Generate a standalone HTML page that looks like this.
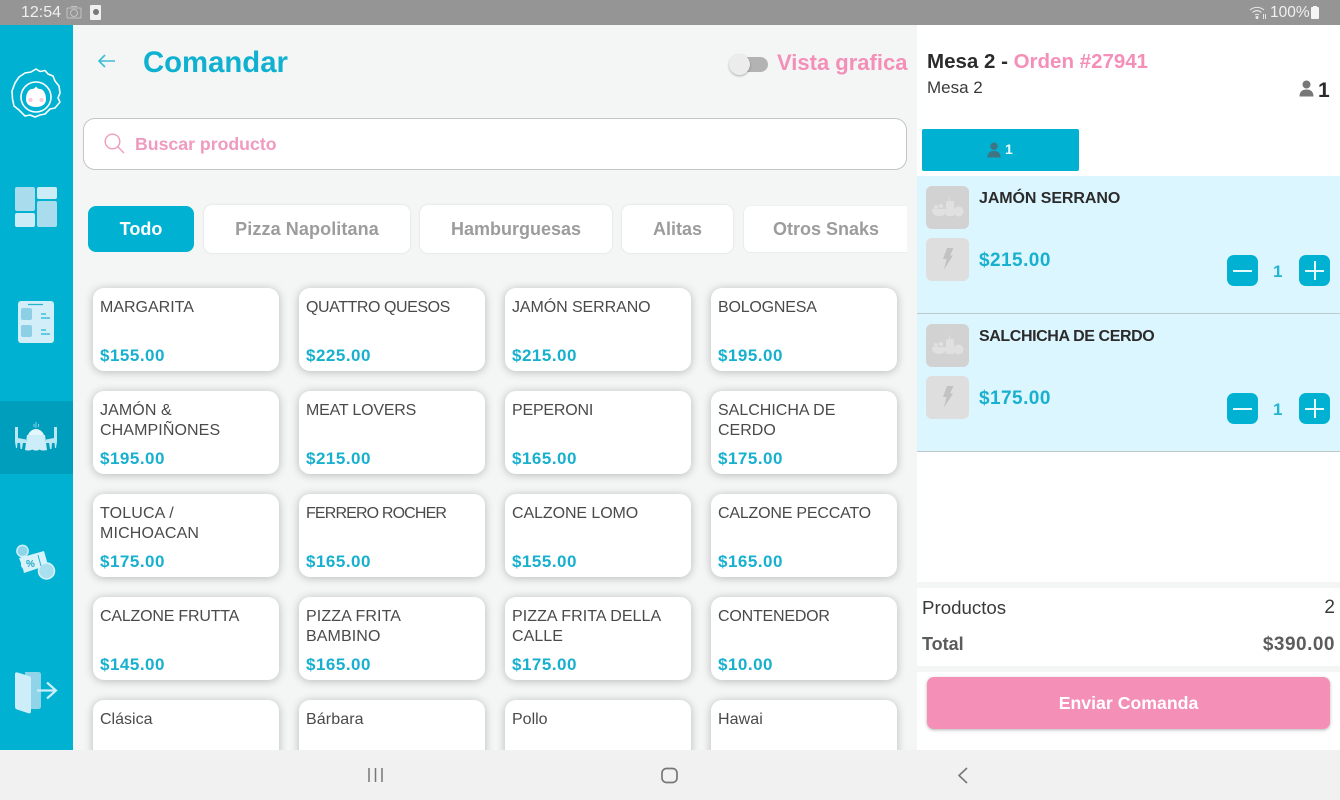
<!DOCTYPE html>
<html lang="es"><head><meta charset="utf-8"><title>Comandar</title>
<style>
*{box-sizing:border-box}
html,body{margin:0;padding:0;width:1340px;height:800px;overflow:hidden;background:#fff;font-family:"Liberation Sans",sans-serif}
.a{position:absolute}
.t{position:absolute;white-space:nowrap}
.card{position:absolute;width:186px;height:83px;background:#fff;border-radius:11px;box-shadow:0 1px 9px rgba(0,0,0,.25)}
.card .n{position:absolute;left:7px;top:10px;font-size:16px;line-height:20px;color:#4a4a4a;white-space:nowrap}
.card .p{position:absolute;left:7px;top:59px;font-size:17px;letter-spacing:.5px;line-height:18px;font-weight:bold;color:#18b0cf;white-space:nowrap}
.tab{position:absolute;top:205px;height:48px;background:#fff;border-radius:8px;box-shadow:0 0 2px rgba(0,0,0,.13);font-weight:bold;font-size:18px;line-height:48px;color:#9c9c9c;text-align:center;white-space:nowrap;overflow:hidden}
.thumb{position:absolute;left:926px;width:43px;height:43px;border-radius:6px}
.btn{position:absolute;width:31px;height:31px;background:#00b1d2;border-radius:7px}
.btn i{position:absolute;background:#e6fbff}
</style></head><body>

<div class="a" style="left:73px;top:25px;width:844px;height:725px;background:#f4f6f6"></div>

<!-- cards -->
<div id="cards" class="a" style="left:0;top:0;width:917px;height:750px;overflow:hidden">
<div class="card" style="left:93px;top:288px"><div class="n">MARGARITA</div><div class="p">$155.00</div></div>
<div class="card" style="left:299px;top:288px"><div class="n" style="letter-spacing:-.43px">QUATTRO QUESOS</div><div class="p">$225.00</div></div>
<div class="card" style="left:505px;top:288px"><div class="n" style="letter-spacing:-.08px">JAMÓN SERRANO</div><div class="p">$215.00</div></div>
<div class="card" style="left:711px;top:288px"><div class="n" style="letter-spacing:-.2px">BOLOGNESA</div><div class="p">$195.00</div></div>
<div class="card" style="left:93px;top:391px"><div class="n" style="letter-spacing:.1px">JAMÓN &amp;<br>CHAMPIÑONES</div><div class="p">$195.00</div></div>
<div class="card" style="left:299px;top:391px"><div class="n" style="letter-spacing:-.2px">MEAT LOVERS</div><div class="p">$215.00</div></div>
<div class="card" style="left:505px;top:391px"><div class="n" style="letter-spacing:-.2px">PEPERONI</div><div class="p">$165.00</div></div>
<div class="card" style="left:711px;top:391px"><div class="n">SALCHICHA DE<br>CERDO</div><div class="p">$175.00</div></div>
<div class="card" style="left:93px;top:494px"><div class="n" style="letter-spacing:.15px">TOLUCA /<br>MICHOACAN</div><div class="p">$175.00</div></div>
<div class="card" style="left:299px;top:494px"><div class="n" style="letter-spacing:-.85px">FERRERO ROCHER</div><div class="p">$165.00</div></div>
<div class="card" style="left:505px;top:494px"><div class="n" style="letter-spacing:-.08px">CALZONE LOMO</div><div class="p">$155.00</div></div>
<div class="card" style="left:711px;top:494px"><div class="n" style="letter-spacing:-.2px">CALZONE PECCATO</div><div class="p">$165.00</div></div>
<div class="card" style="left:93px;top:597px"><div class="n" style="letter-spacing:-.2px">CALZONE FRUTTA</div><div class="p">$145.00</div></div>
<div class="card" style="left:299px;top:597px"><div class="n" style="letter-spacing:.1px">PIZZA FRITA<br>BAMBINO</div><div class="p">$165.00</div></div>
<div class="card" style="left:505px;top:597px"><div class="n" style="letter-spacing:.06px">PIZZA FRITA DELLA<br>CALLE</div><div class="p">$175.00</div></div>
<div class="card" style="left:711px;top:597px"><div class="n" style="letter-spacing:-.2px">CONTENEDOR</div><div class="p">$10.00</div></div>
<div class="card" style="left:93px;top:700px"><div class="n">Clásica</div></div>
<div class="card" style="left:299px;top:700px"><div class="n" style="letter-spacing:.1px">Bárbara</div></div>
<div class="card" style="left:505px;top:700px"><div class="n">Pollo</div></div>
<div class="card" style="left:711px;top:700px"><div class="n" style="letter-spacing:.1px">Hawai</div></div>
</div>

<!-- header -->
<svg class="a" style="left:97px;top:52px" width="20" height="18" viewBox="0 0 20 18" fill="none" stroke="#3cbcd6" stroke-width="1.6"><path d="M2 9H18M8 3L2 9L8 15"/></svg>
<div class="t" style="left:143px;top:45px;font-size:29.300px;line-height:36px;font-weight:bold;color:#0fb0d0">Comandar</div>
<div class="a" style="left:732px;top:57px;width:36px;height:15px;border-radius:8px;background:#b3b3b3"></div>
<div class="a" style="left:729px;top:54px;width:21px;height:21px;border-radius:50%;background:#ececec;box-shadow:0 1px 2px rgba(0,0,0,.3)"></div>
<div class="t" style="left:777px;top:49px;font-size:22px;line-height:28px;font-weight:bold;color:#f48fb8">Vista grafica</div>

<!-- search -->
<div class="a" style="left:83px;top:118px;width:824px;height:52px;background:#fff;border:1px solid #c4c4c4;border-radius:12px"></div>
<svg class="a" style="left:104px;top:133px" width="21" height="21" viewBox="0 0 21 21" fill="none" stroke="#ef9dbf" stroke-width="1.400"><circle cx="8.500" cy="8.500" r="7.300"/><path d="M13.800 13.800L20 20"/></svg>
<div class="t" style="left:135px;top:134px;font-size:17.700px;line-height:21px;font-weight:bold;color:#f09ac0">Buscar producto</div>

<!-- tabs -->
<div class="tab" style="left:88px;top:206px;width:106px;height:46px;line-height:46px;background:#00b1d2;color:#fff;box-shadow:none">Todo</div>
<div class="tab" style="left:204px;width:206px;letter-spacing:.1px">Pizza Napolitana</div>
<div class="tab" style="left:420px;width:192px">Hamburguesas</div>
<div class="tab" style="left:622px;width:111px">Alitas</div>
<div class="tab" style="left:743px;width:164px;border-radius:8px 0 0 8px;box-shadow:none;border-left:1px solid #ececec;border-top:1px solid #f0f0f0;border-bottom:1px solid #ececec;line-height:46px;text-indent:1px">Otros Snaks</div>

<!-- sidebar -->
<div class="a" style="left:0;top:25px;width:73px;height:725px;background:#00b1d2"></div>
<div class="a" style="left:0;top:401px;width:73px;height:73px;background:#009ebd"></div>

<svg class="a" style="left:10px;top:67px" width="52" height="52" viewBox="0 0 52 52">
<path d="M26 2L30 4.500L35 3.500L38 7L43 9L45 14L49 19L50 26L48 31L50 35L45 41L40 42L35 47L30 48L25 50L20 48L15 49L9 43L4 39L2.500 32L2 24L5 16L9 10L15 6L21 5Z" fill="none" stroke="#fff" stroke-width="1.600" stroke-linejoin="round"/>
<circle cx="26" cy="30" r="15" fill="none" stroke="#fff" stroke-width="1.600"/>
<path d="M16 32C16 26 19 22 22 22C23.500 22 25 21 26 19.500C27 21 28.500 22 30 22C33 22 36 26 36 32C36 38 31 40 26 40C21 40 16 38 16 32Z" fill="#fff"/>
<circle cx="20.500" cy="33" r="2.200" fill="#f7cbdc"/><circle cx="31.500" cy="33" r="2.200" fill="#f7cbdc"/>
</svg>

<svg class="a" style="left:15px;top:187px" width="43" height="41" viewBox="0 0 43 41">
<rect x="0" y="0" width="20" height="24" rx="2" fill="#a9dcec"/><rect x="22" y="0" width="20" height="12" rx="2" fill="#ccedf7"/>
<rect x="22" y="14" width="20" height="26" rx="2" fill="#a9dcec"/><rect x="0" y="26" width="20" height="14" rx="2" fill="#ccedf7"/>
</svg>

<svg class="a" style="left:18px;top:301px" width="37" height="42" viewBox="0 0 37 42">
<rect x="0" y="0" width="36" height="42" rx="3" fill="#d2eef8"/>
<rect x="3" y="7" width="11" height="12" rx="2" fill="#8dd0e6"/><rect x="3" y="24" width="11" height="12" rx="2" fill="#8dd0e6"/>
<path d="M10 3.500H25M23 13H28M23 17H32M23 29H28M23 33H32" stroke="#22b5d2" stroke-width="1.300"/>
</svg>

<svg class="a" style="left:15px;top:422px" width="42" height="31" viewBox="0 0 42 31">
<path d="M0 5H3V16L11 17.500V21H8L7 27H5.500L5 21L2.500 21L2 26H1L0 20Z" fill="#b9e7f4"/>
<path d="M42 5H39V16L31 17.500V21H34L35 27H36.500L37 21L39.500 21L40 26H41L42 20Z" fill="#b9e7f4"/>
<path d="M12 13H30L32 28C29 29 26 28.500 24.500 27.500C22 29 19.500 29 17.500 27.500C15.500 28.500 12.500 29 10 28Z" fill="#cdeef8"/>
<path d="M13 13C14.500 9 18 7 21 7C24 7 27.500 9 29 13Z" fill="#e2f6fb"/>
<path d="M19 5V2M21 6V0M23.500 5V2" stroke="#8dd0e6" stroke-width="1"/>
</svg>

<svg class="a" style="left:15px;top:544px" width="42" height="38" viewBox="0 0 42 38">
<path d="M4 14L29 7L33 21L9 29L8 25L6 22L6 19Z" fill="#d8f2fa"/>
<circle cx="7.500" cy="7" r="5.700" fill="#8fd5e9" stroke="#d8f2fa" stroke-width="1.300"/>
<circle cx="31.500" cy="27" r="8" fill="#a9e0f0" stroke="#d8f2fa" stroke-width="1.500"/>
<text x="11" y="23" font-family="Liberation Sans,sans-serif" font-size="10" font-weight="bold" fill="#22a7c4">%</text>
<path d="M23 11L26 22" stroke="#22b5d2" stroke-width="1"/>
</svg>

<svg class="a" style="left:15px;top:671px" width="43" height="43" viewBox="0 0 43 43">
<path d="M10 1H23C25.500 1 26 2 26 4V35C26 37 25 38 23 38H12Z" fill="#8fd4e9"/>
<path d="M0 3C0 1.500 1 1 2.500 1.500L14 5C15.500 5.400 16 6 16 7.500V40C16 42 15 42.800 13.500 42.300L2 38.500C.5 38 0 37 0 35.500Z" fill="#cdeef8"/>
<path d="M22 19.500H41M32 11.500L41 19.500L32 27.500" fill="none" stroke="#cdeef8" stroke-width="2.200"/>
</svg>

<!-- right panel -->
<div class="a" style="left:917px;top:25px;width:423px;height:725px;background:#fff"></div>
<div class="t" style="left:927px;top:49px;font-size:20.500px;line-height:25px;font-weight:bold;color:#2b2b2b">Mesa 2 - <span style="color:#f48fb8">Orden #27941</span></div>
<div class="t" style="left:927px;top:78px;font-size:17px;line-height:19px;color:#3a3a3a">Mesa 2</div>
<svg class="a" style="left:1299px;top:80px" width="15" height="17" viewBox="0 0 15 17" fill="#777"><circle cx="7.500" cy="4.500" r="4"/><path d="M0.500 16.500C0.500 11.500 3.500 9.500 7.500 9.500C11.500 9.500 14.500 11.500 14.500 16.500Z"/></svg>
<div class="t" style="left:1318px;top:79px;font-size:21px;line-height:24px;font-weight:bold;color:#2b2b2b">1</div>

<div class="a" style="left:922px;top:129px;width:157px;height:42px;background:#00b1d2;border-radius:2px"></div>
<svg class="a" style="left:987px;top:142px" width="14" height="16" viewBox="0 0 15 17" fill="#3f7482"><circle cx="7.500" cy="4.500" r="4"/><path d="M0.500 16.500C0.500 11.500 3.500 9.500 7.500 9.500C11.500 9.500 14.500 11.500 14.500 16.500Z"/></svg>
<div class="t" style="left:1005px;top:141px;font-size:14px;line-height:17px;font-weight:bold;color:#e8fbff">1</div>

<div class="a" style="left:917px;top:176px;width:423px;height:138px;background:#dcf6ff;border-bottom:1px solid #bcc8cc"></div>
<div class="a" style="left:917px;top:314px;width:423px;height:138px;background:#dcf6ff;border-bottom:1px solid #bcc8cc"></div>

<!-- item 1 -->
<div class="thumb" style="top:186px;background:#d2d2d2"></div>
<svg class="a" style="left:931px;top:196px" width="34" height="22" viewBox="0 0 34 22" fill="#e0e0e0"><path d="M1 13H15.500C15.500 18 13 20 8 20C3.500 20 1 18 1 13Z"/><circle cx="5" cy="11" r="2"/><circle cx="10" cy="10" r="2.200"/><rect x="15" y="5" width="8" height="15" rx="1.500"/><path d="M19 5L18 1" stroke="#e0e0e0"/><circle cx="27.500" cy="15.500" r="5"/></svg>
<div class="thumb" style="top:238px;background:#dedede"></div>
<svg class="a" style="left:942px;top:248px" width="13" height="22" viewBox="0 0 13 22" fill="#c2c2c2"><path d="M5 0H11.500L8 7.500H11L2 21.500L4.500 11H1Z"/></svg>
<div class="t" style="left:979px;top:189px;font-size:16px;letter-spacing:-.08px;line-height:19px;font-weight:bold;color:#2b2b2b">JAMÓN SERRANO</div>
<div class="t" style="left:979px;top:250px;font-size:19px;letter-spacing:.45px;line-height:22px;font-weight:bold;color:#18b0cf">$215.00</div>
<div class="btn" style="left:1227px;top:255px"><i style="left:6px;top:14.500px;width:19px;height:2px"></i></div>
<div class="t" style="left:1273px;top:262px;font-size:17px;line-height:19px;font-weight:bold;color:#22b5d2">1</div>
<div class="btn" style="left:1299px;top:255px"><i style="left:6px;top:15px;width:19px;height:1.500px"></i><i style="left:15px;top:6px;width:1.500px;height:19px"></i></div>

<!-- item 2 -->
<div class="thumb" style="top:324px;background:#d2d2d2"></div>
<svg class="a" style="left:931px;top:334px" width="34" height="22" viewBox="0 0 34 22" fill="#e0e0e0"><path d="M1 13H15.500C15.500 18 13 20 8 20C3.500 20 1 18 1 13Z"/><circle cx="5" cy="11" r="2"/><circle cx="10" cy="10" r="2.200"/><rect x="15" y="5" width="8" height="15" rx="1.500"/><path d="M19 5L18 1" stroke="#e0e0e0"/><circle cx="27.500" cy="15.500" r="5"/></svg>
<div class="thumb" style="top:376px;background:#dedede"></div>
<svg class="a" style="left:942px;top:386px" width="13" height="22" viewBox="0 0 13 22" fill="#c2c2c2"><path d="M5 0H11.500L8 7.500H11L2 21.500L4.500 11H1Z"/></svg>
<div class="t" style="left:979px;top:327px;font-size:16px;letter-spacing:-.4px;line-height:19px;font-weight:bold;color:#2b2b2b">SALCHICHA DE CERDO</div>
<div class="t" style="left:979px;top:388px;font-size:19px;letter-spacing:.45px;line-height:22px;font-weight:bold;color:#18b0cf">$175.00</div>
<div class="btn" style="left:1227px;top:393px"><i style="left:6px;top:14.500px;width:19px;height:2px"></i></div>
<div class="t" style="left:1273px;top:400px;font-size:17px;line-height:19px;font-weight:bold;color:#22b5d2">1</div>
<div class="btn" style="left:1299px;top:393px"><i style="left:6px;top:15px;width:19px;height:1.500px"></i><i style="left:15px;top:6px;width:1.500px;height:19px"></i></div>

<!-- totals -->
<div class="a" style="left:917px;top:582px;width:423px;height:6px;background:#f4f6f6"></div>
<div class="a" style="left:917px;top:666px;width:423px;height:6px;background:#f4f6f6"></div>
<div class="t" style="left:922px;top:597px;font-size:18.700px;line-height:21px;color:#3a3a3a">Productos</div>
<div class="t" style="right:5px;top:597px;font-size:19px;line-height:21px;color:#3a3a3a">2</div>
<div class="t" style="left:922px;top:634px;font-size:18px;line-height:21px;font-weight:bold;color:#5c5c5c">Total</div>
<div class="t" style="right:5px;top:634px;font-size:19px;letter-spacing:.5px;line-height:21px;font-weight:bold;color:#5c5c5c">$390.00</div>
<div class="a" style="left:927px;top:677px;width:403px;height:52px;border-radius:7px;background:#f48fb8;box-shadow:0 1px 3px rgba(0,0,0,.3);color:#fff;font-weight:bold;font-size:17.700px;line-height:52px;text-align:center">Enviar Comanda</div>

<!-- status bar -->
<div class="a" style="left:0;top:0;width:1340px;height:25px;background:#959595"></div>
<div class="t" style="left:21px;top:4px;font-size:16px;line-height:18px;color:#f0f0f0">12:54</div>
<svg class="a" style="left:66px;top:5px" width="16" height="15" viewBox="0 0 16 15" fill="none" stroke="#c4c4c4" stroke-width="1"><rect x="1" y="3" width="14" height="10" rx="1"/><circle cx="8" cy="8" r="3.500"/><path d="M5 1.500H11"/></svg>
<div class="a" style="left:90px;top:5px;width:11px;height:15px;background:#f0f0f0;border-radius:1px"></div>
<div class="a" style="left:92.500px;top:9px;width:6px;height:6px;background:#777;border-radius:50%"></div>
<svg class="a" style="left:1249px;top:6px" width="18" height="13" viewBox="0 0 18 13" fill="none" stroke="#e6e6e6" stroke-width="1.100"><path d="M1 4C5 0.500 11 0.500 15 4M3.500 6.500C6.500 4 9.500 4 12.500 6.500M6 9C7.500 8 8.500 8 10 9"/><circle cx="8" cy="11.500" r="1" fill="#e6e6e6"/><path d="M14.500 8V13M16.500 8V13" stroke-width="1"/></svg>
<div class="t" style="left:1270px;top:4px;font-size:15.500px;line-height:18px;color:#f0f0f0">100%</div>
<div class="a" style="left:1311px;top:7px;width:8px;height:12px;background:#f4f4f4;border-radius:1px"></div>
<div class="a" style="left:1313px;top:5.500px;width:4px;height:2px;background:#f4f4f4"></div>

<!-- nav bar -->
<div class="a" style="left:0;top:750px;width:1340px;height:50px;background:#f1f1f1"></div>
<svg class="a" style="left:366px;top:766px" width="19" height="18" viewBox="0 0 19 18" stroke="#777" stroke-width="1.500"><path d="M3 2V16M9.500 2V16M16 2V16"/></svg>
<svg class="a" style="left:660px;top:766px" width="19" height="19" viewBox="0 0 19 19" fill="none" stroke="#777" stroke-width="1.700"><rect x="2" y="2.500" width="15" height="14" rx="4.500"/></svg>
<svg class="a" style="left:955px;top:766px" width="16" height="19" viewBox="0 0 16 19" fill="none" stroke="#777" stroke-width="1.600"><path d="M12 2L4 9.500L12 17"/></svg>

</body></html>
